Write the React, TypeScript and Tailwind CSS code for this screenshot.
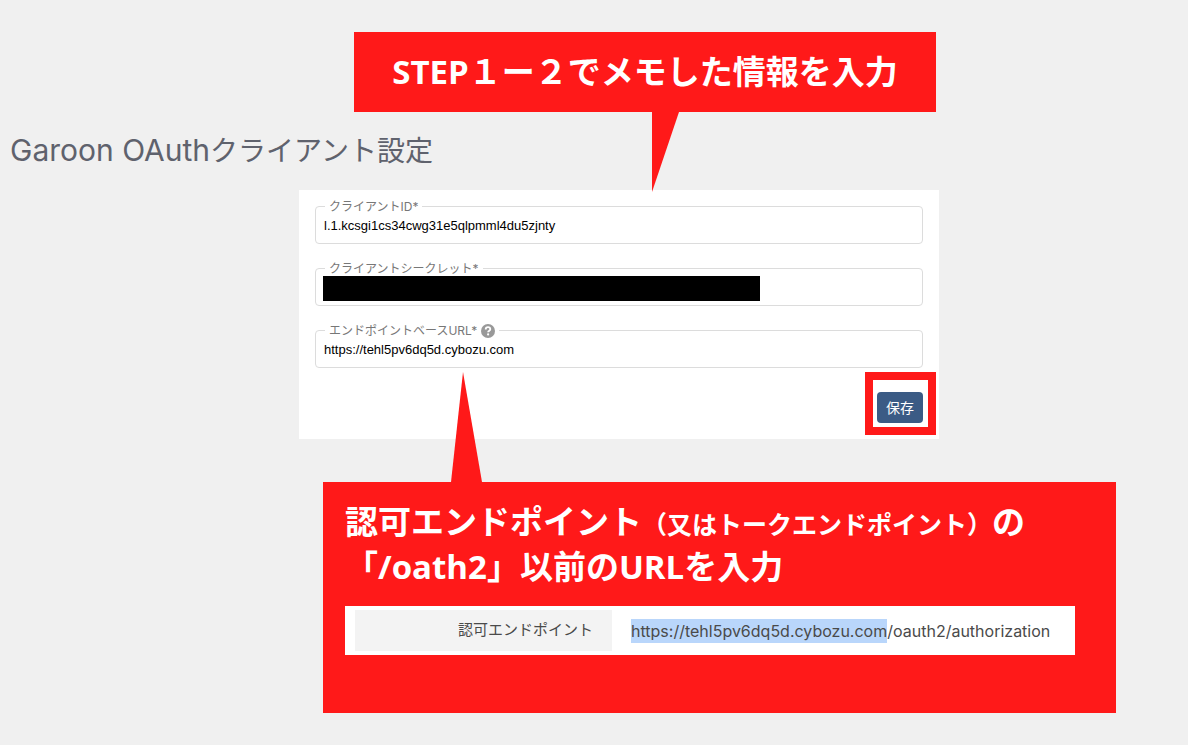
import { ReactNode, useState } from 'react';

interface FieldProps {
    id: string;
    label: string;
    value: string;
    onChange: (value: string) => void;
    /** Aide affichée à droite du libellé */
    help?: ReactNode;
    /** Élément posé par-dessus la valeur */
    children?: ReactNode;
}

function Field({ id, label, value, onChange, help, children }: FieldProps) {
    return (
        <div className="relative">
            <div className="absolute -top-[7px] left-[10px] flex h-4 items-center gap-1 bg-white px-1">
                <label htmlFor={id} className="text-xs leading-4 text-[#777777]">
                    {label}
                </label>
                {help}
            </div>
            <input
                id={id}
                type="text"
                required
                value={value}
                onChange={(e) => onChange(e.target.value)}
                className="block h-[38px] w-full rounded border border-[#dcdcdc] bg-white px-2 font-['Liberation_Sans',sans-serif] text-[13px] text-black outline-none"
            />
            {children}
        </div>
    );
}

function HelpIcon() {
    return (
        <svg viewBox="0 0 14 14" className="h-[14px] w-[14px]" aria-hidden="true">
            <circle cx="7" cy="7" r="7" fill="#999999" />
            <path
                d="M4.7 5.5C4.7 4 5.7 3.2 7 3.2s2.3.8 2.3 2c0 1.5-2.2 1.5-2.2 3.1"
                fill="none"
                stroke="#ffffff"
                strokeWidth="1.8"
            />
            <circle cx="7.1" cy="10.4" r="1.1" fill="#ffffff" />
        </svg>
    );
}

const CALLOUT_FONT = "font-['Open_Sans','Noto_Sans_CJK_JP',sans-serif]";

export default function App() {
    const [clientId, setClientId] = useState('l.1.kcsgi1cs34cwg31e5qlpmml4du5zjnty');
    const [secret, setSecret] = useState('');
    const [baseUrl, setBaseUrl] = useState('https://tehl5pv6dq5d.cybozu.com');

    return (
        <main className="min-h-screen bg-[#f0f0f0] py-8 font-['Inter','Noto_Sans_CJK_JP',sans-serif]">
            <div className="flex justify-center pl-[102px]">
                <div className="relative z-10 w-full max-w-[582px] bg-[#ff1919] py-4 text-center text-white">
                    <p className={`text-[33px] leading-[48px] font-bold ${CALLOUT_FONT}`}>
                        STEP１ー２でメモした情報を入力
                    </p>
                    <svg
                        viewBox="0 0 28 80"
                        className="absolute top-full left-[298px] h-20 w-7"
                        aria-hidden="true"
                    >
                        <path d="M0 0H27L0 80Z" fill="#ff1919" />
                    </svg>
                </div>
            </div>

            <h1 className="mt-[21px] mb-[21px] pl-[10px] text-[28px] leading-9 text-[#5f626d]">
                <span className="text-[30px] leading-none">Garoon OAuth</span>クライアント設定
            </h1>

            <div className="flex justify-center pl-[50px]">
                <form
                    className="flex w-full max-w-[640px] flex-col gap-6 bg-white p-4"
                    onSubmit={(e) => e.preventDefault()}
                >
                    <Field id="client-id" label="クライアントID*" value={clientId} onChange={setClientId} />
                    <Field
                        id="client-secret"
                        label="クライアントシークレット*"
                        value={secret}
                        onChange={setSecret}
                    >
                        <div className="absolute top-2 left-2 h-[25px] w-[437px] bg-black" />
                    </Field>
                    <Field
                        id="base-url"
                        label="エンドポイントベースURL*"
                        value={baseUrl}
                        onChange={setBaseUrl}
                        help={<HelpIcon />}
                    />
                    <div className="relative self-end">
                        <button
                            type="submit"
                            className="block h-[31px] rounded bg-[#3b5b85] px-[9px] text-sm text-white"
                        >
                            保存
                        </button>
                        <div className="pointer-events-none absolute -top-5 -right-[13px] -bottom-3 -left-3 border-8 border-[#ff1919]" />
                    </div>
                </form>
            </div>

            <div className="mt-[43px] flex justify-center pl-[251px]">
                <div className="relative w-full max-w-[793px] bg-[#ff1919] pt-[17px] pr-[41px] pb-[58px] pl-[22px]">
                    <svg
                        viewBox="0 0 32 110"
                        className="absolute bottom-full left-32 h-[110px] w-8"
                        aria-hidden="true"
                    >
                        <path d="M12 0L31 110H0Z" fill="#ff1919" />
                    </svg>
                    <p className={`text-[33px] leading-[45px] font-bold text-white ${CALLOUT_FONT}`}>
                        認可エンドポイント
                        <span className="text-[25px] leading-none">（又はトークエンドポイント）</span>の
                        <br />
                        「/oath2」以前のURLを入力
                    </p>
                    <div className="mt-[17px] bg-white py-1 pl-[10px]">
                        <table className="w-full text-[#4a4a4a]">
                            <tbody>
                                <tr className="h-[41px]">
                                    <th
                                        scope="row"
                                        className="w-[257px] bg-[#f3f3f3] pr-[19px] text-right text-[15px] font-normal"
                                    >
                                        認可エンドポイント
                                    </th>
                                    <td className="pl-[19px] text-base">
                                        <mark className="bg-[#b9d6fb] py-[2px] text-inherit">
                                            https://tehl5pv6dq5d.cybozu.com
                                        </mark>
                                        /oauth2/authorization
                                    </td>
                                </tr>
                            </tbody>
                        </table>
                    </div>
                </div>
            </div>
        </main>
    );
}
